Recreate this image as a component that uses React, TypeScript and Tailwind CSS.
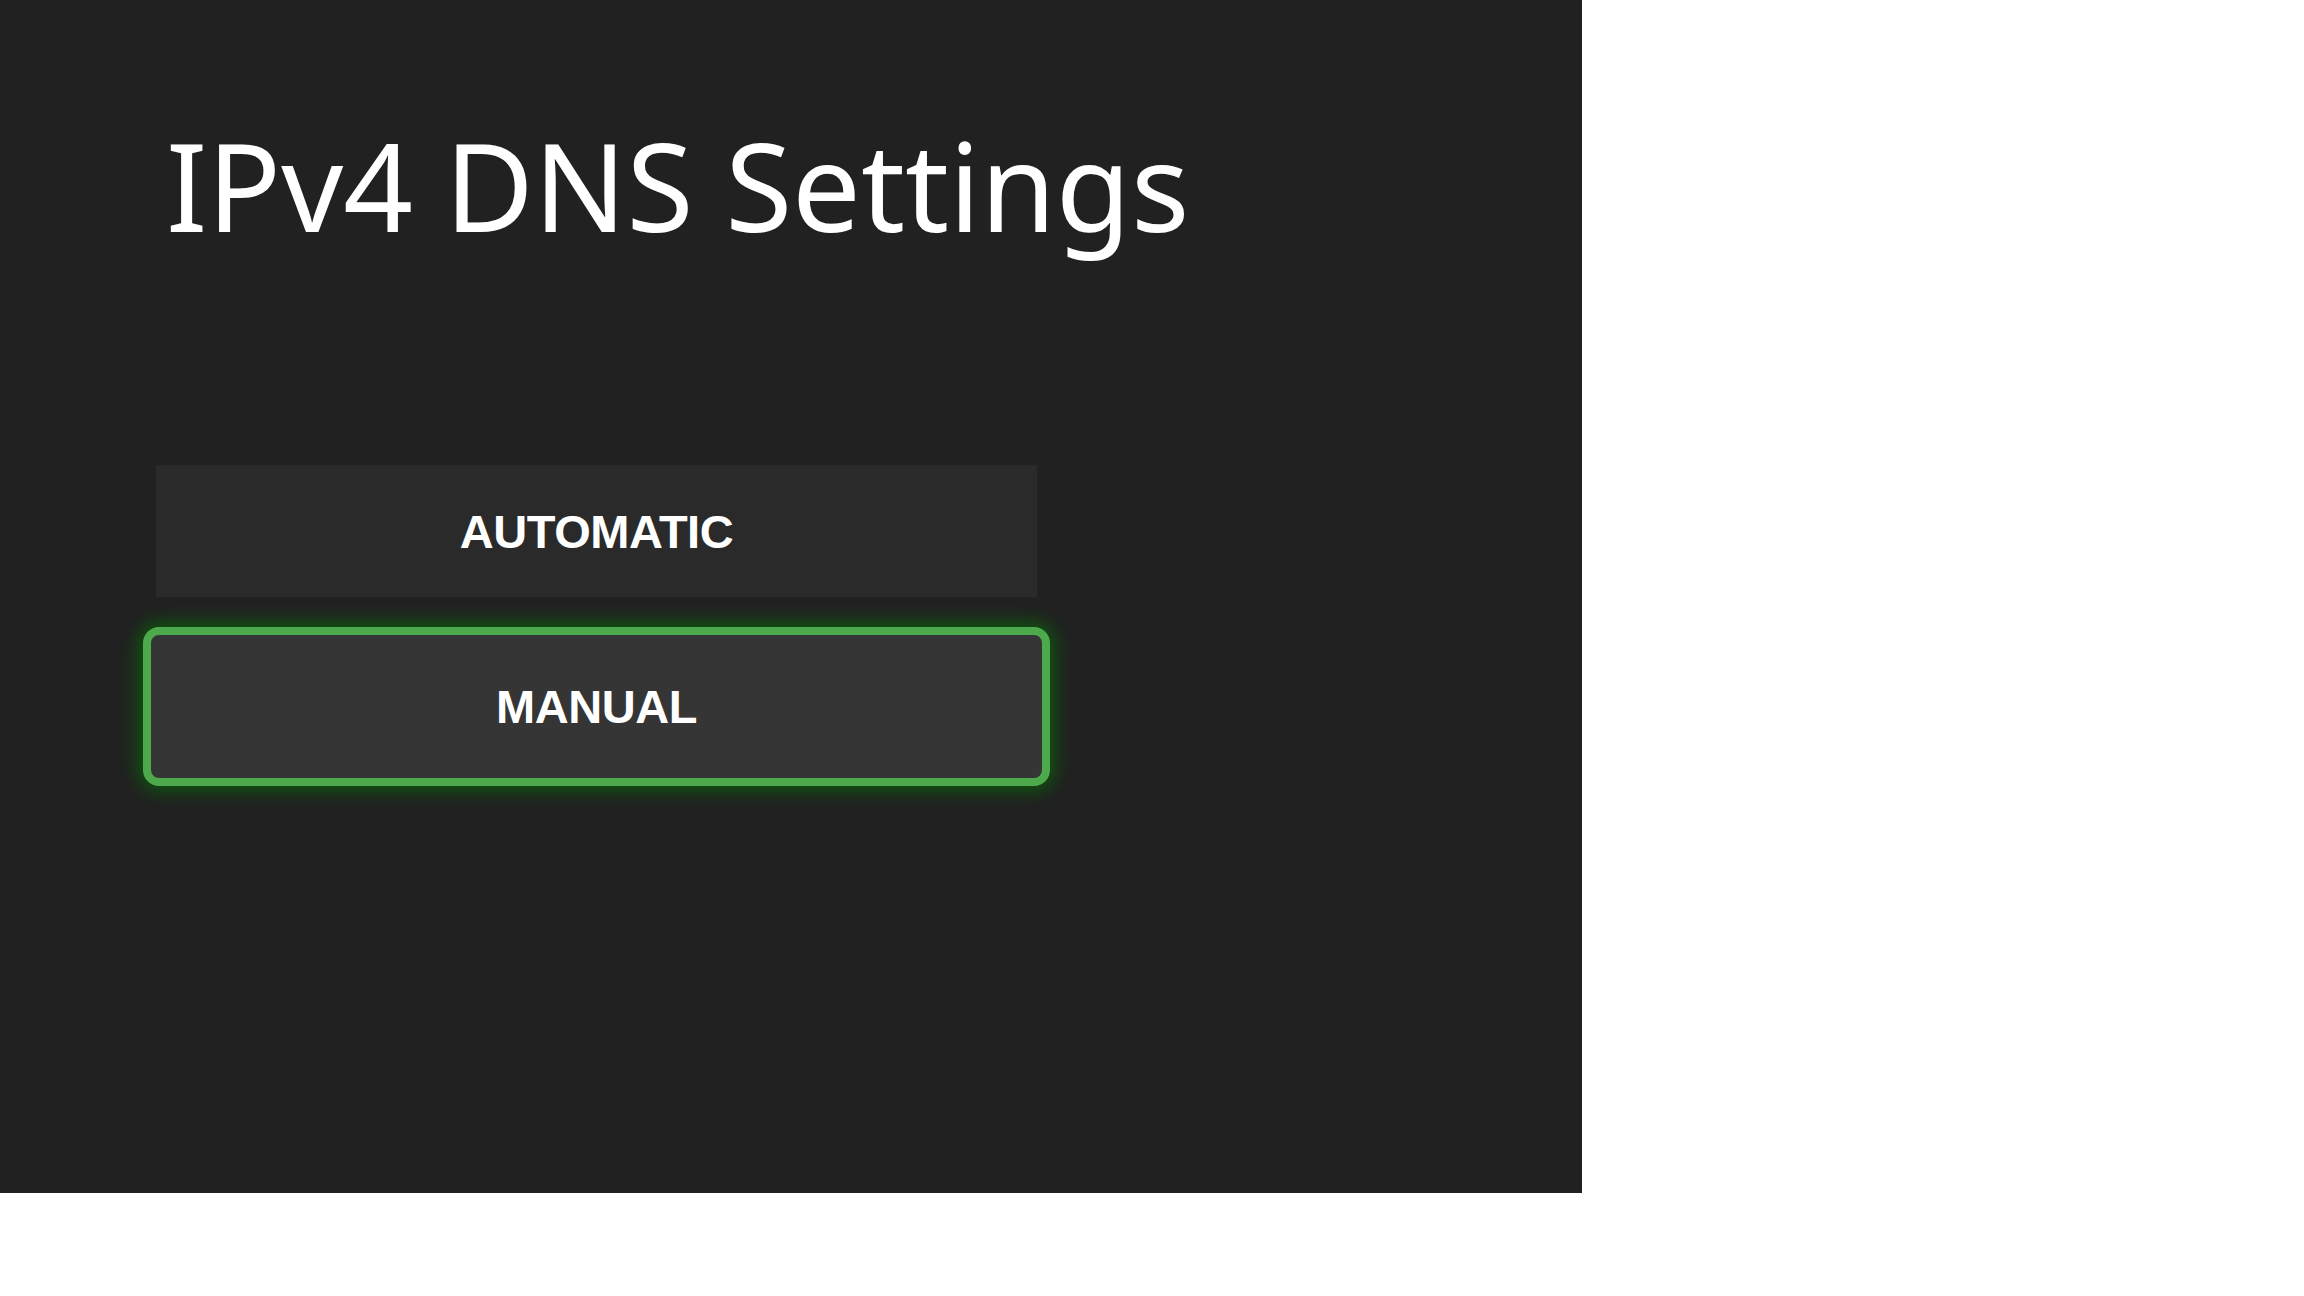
function OptionButton({ label, focused }: { label: string; focused?: boolean }) {
  if (focused) {
    return (
      <div className="w-[907px] h-[159px] rounded-[16px] border-[8px] border-[#4caa4c] bg-[#353535] shadow-[0_0_18px_5px_rgba(10,100,10,0.8)] flex items-center justify-center">
        <span className="text-white font-bold text-[47px] leading-none tracking-[-0.01em] font-['Liberation_Sans',Arial,sans-serif]">
          {label}
        </span>
      </div>
    );
  }
  return (
    <div className="w-[881px] h-[132px] bg-[#2a2a2a] flex items-center justify-center">
      <span className="text-white font-bold text-[47px] leading-none tracking-[-0.01em] font-['Liberation_Sans',Arial,sans-serif]">
        {label}
      </span>
    </div>
  );
}

export default function App() {
  return (
    <div className="w-[2304px] h-[1296px] bg-white">
      <div className="w-[1582px] h-[1193px] bg-[#212121] flex flex-col">
        <h1 className="mt-[124px] ml-[166px] text-white text-[122px] leading-none font-normal font-['Noto_Sans',sans-serif]">
          IPv4 DNS Settings
        </h1>
        <div className="mt-[219px] ml-[143px] w-[907px] flex flex-col items-center gap-[30px]">
          <OptionButton label="AUTOMATIC" />
          <OptionButton label="MANUAL" focused />
        </div>
      </div>
    </div>
  );
}
